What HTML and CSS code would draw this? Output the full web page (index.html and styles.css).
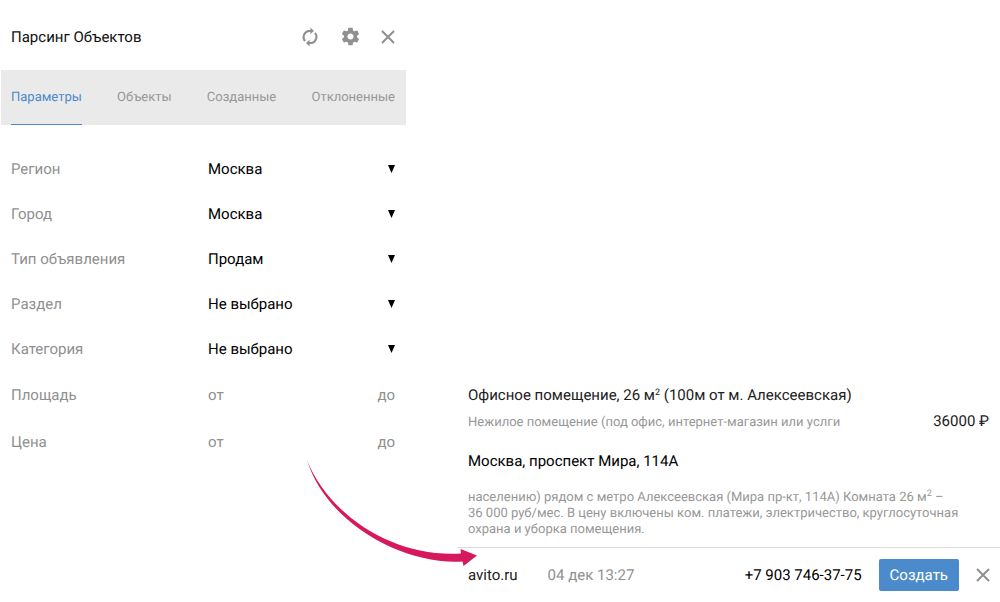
FILE: index.html
```html
<!DOCTYPE html>
<html lang="ru">
<head>
<meta charset="utf-8">
<meta name="viewport" content="width=device-width, initial-scale=1">
<title>Парсинг Объектов</title>
<link rel="stylesheet" href="styles.css">
</head>
<body>
<main class="page">
  <section class="panel">
    <header class="panel-header">
      <h1 class="panel-title">Парсинг Объектов</h1>
      <div class="actions">
        <button class="icon-button" type="button" aria-label="Обновить">
          <svg width="20" height="20" viewBox="0 0 20 20" fill="none" stroke="#909090" stroke-width="2">
            <path d="M5 14.200A6.300 6.300 0 0 1 8.500 4H11"/>
            <path d="M15 5.800A6.300 6.300 0 0 1 11.500 16H9"/>
            <path d="M10.400 .4 14 4 10.400 7.200zM9.600 12.800 6 16 9.600 19.600z" fill="#909090" stroke="none"/>
          </svg>
        </button>
        <button class="icon-button" type="button" aria-label="Настройки">
          <svg width="21" height="21" viewBox="0 0 24 24" fill="#909090">
            <path d="M19.43 12.98c.04-.32.07-.64.07-.98s-.03-.66-.07-.98l2.11-1.65c.19-.15.24-.42.12-.64l-2-3.46c-.12-.22-.39-.3-.61-.22l-2.49 1c-.52-.4-1.08-.73-1.69-.98l-.38-2.65C14.46 2.18 14.25 2 14 2h-4c-.25 0-.46.18-.49.42l-.38 2.65c-.61.25-1.17.59-1.69.98l-2.49-1c-.23-.09-.49 0-.61.22l-2 3.46c-.13.22-.07.49.12.64l2.11 1.65c-.04.32-.07.65-.07.98s.03.66.07.98l-2.11 1.65c-.19.15-.24.42-.12.64l2 3.46c.12.22.39.3.61.22l2.49-1c.52.4 1.08.73 1.69.98l.38 2.65c.03.24.24.42.49.42h4c.25 0 .46-.18.49-.42l.38-2.65c.61-.25 1.17-.59 1.69-.98l2.49 1c.23.09.49 0 .61-.22l2-3.46c.12-.22.07-.49-.12-.64l-2.11-1.65zM12 15.5c-1.93 0-3.500-1.57-3.500-3.500s1.57-3.500 3.500-3.500 3.500 1.57 3.500 3.500-1.57 3.500-3.500 3.500z"/>
          </svg>
        </button>
        <button class="icon-button" type="button" aria-label="Закрыть">
          <svg width="14" height="14" viewBox="0 0 14 14" stroke="#909090" stroke-width="2"><path d="M1 1 13 13M13 1 1 13"/></svg>
        </button>
      </div>
    </header>
    <nav class="tabs">
      <a class="tab tab-active" href="#params">Параметры</a>
      <a class="tab" href="#objects">Объекты</a>
      <a class="tab" href="#created">Созданные</a>
      <a class="tab" href="#rejected">Отклоненные</a>
    </nav>
    <form class="filters">
      <div class="row">
        <label class="label" for="region">Регион</label>
        <div class="picker">
          <select class="select" id="region"><option>Москва</option></select>
          <svg class="caret" width="7" height="8" viewBox="0 0 7 8"><path d="M0 0h7L3.500 8z"/></svg>
        </div>
      </div>
      <div class="row">
        <label class="label" for="city">Город</label>
        <div class="picker">
          <select class="select" id="city"><option>Москва</option></select>
          <svg class="caret" width="7" height="8" viewBox="0 0 7 8"><path d="M0 0h7L3.500 8z"/></svg>
        </div>
      </div>
      <div class="row">
        <label class="label" for="kind">Тип объявления</label>
        <div class="picker">
          <select class="select" id="kind"><option>Продам</option></select>
          <svg class="caret" width="7" height="8" viewBox="0 0 7 8"><path d="M0 0h7L3.500 8z"/></svg>
        </div>
      </div>
      <div class="row">
        <label class="label" for="section">Раздел</label>
        <div class="picker">
          <select class="select" id="section"><option>Не выбрано</option></select>
          <svg class="caret" width="7" height="8" viewBox="0 0 7 8"><path d="M0 0h7L3.500 8z"/></svg>
        </div>
      </div>
      <div class="row">
        <label class="label" for="category">Категория</label>
        <div class="picker">
          <select class="select" id="category"><option>Не выбрано</option></select>
          <svg class="caret" width="7" height="8" viewBox="0 0 7 8"><path d="M0 0h7L3.500 8z"/></svg>
        </div>
      </div>
      <div class="row row-range">
        <label class="label" for="area-from">Площадь</label>
        <div class="range">
          <input class="input" id="area-from" type="text" placeholder="от">
          <input class="input input-end" type="text" placeholder="до" aria-label="Площадь до">
        </div>
      </div>
      <div class="row row-range">
        <label class="label" for="price-from">Цена</label>
        <div class="range">
          <input class="input" id="price-from" type="text" placeholder="от">
          <input class="input input-end" type="text" placeholder="до" aria-label="Цена до">
        </div>
      </div>
    </form>
  </section>

  <article class="offer">
    <div class="offer-body">
      <h2 class="offer-title">Офисное помещение, 26 м<sup class="power">2</sup> (100м от м. Алексеевская)</h2>
      <div class="offer-summary">
        <p class="note">Нежилое помещение (под офис, интернет-магазин или услги</p>
        <span class="price">36000 ₽</span>
      </div>
      <p class="address">Москва, проспект Мира, 114А</p>
      <p class="note description">населению) рядом с метро Алексеевская (Мира пр-кт, 114А) Комната 26 м<sup class="power">2</sup> –<br>36 000 руб/мес. В цену включены ком. платежи, электричество, круглосуточная охрана и уборка помещения.</p>
    </div>
    <footer class="offer-footer">
      <a class="source" href="#avito">avito.ru</a>
      <time class="date">04 дек 13:27</time>
      <a class="phone" href="tel:+79037463775">+7 903 746-37-75</a>
      <button class="create" type="button">Создать</button>
      <button class="icon-button" type="button" aria-label="Скрыть">
        <svg width="14" height="14" viewBox="0 0 14 14" stroke="#909090" stroke-width="2"><path d="M1 1 13 13M13 1 1 13"/></svg>
      </button>
    </footer>
    <svg class="arrow" width="172" height="108" viewBox="0 0 172 108" fill="#d6185e" aria-hidden="true">
      <path d="M0 0C22 56 88 98 154 93.500L153.500 89 170 95.500 156.500 106 155.500 101.500C92 105 18 60 0 0z"/>
    </svg>
  </article>
</main>
</body>
</html>
```
FILE: styles.css
```css
* {
  box-sizing: border-box;
}

body {
  margin: 0;
  background: #fff;
  color: #212121;
  font-family: Roboto, "Noto Sans", sans-serif;
  font-size: 15px;
  line-height: 20px;
  text-rendering: geometricPrecision;
}

h1,
h2,
p {
  margin: 0;
  font-size: 15px;
  font-weight: 400;
}

a {
  color: inherit;
  text-decoration: none;
}

button,
select,
input {
  padding: 0;
  border: 0;
  background: none;
  font: inherit;
  text-rendering: inherit;
}

.page {
  display: grid;
  grid-template-columns: 406fr 543fr;
  column-gap: 51px;
  min-height: 100vh;
}

.panel {
  padding-left: 1px;
}

.panel-header {
  display: flex;
  align-items: center;
  justify-content: space-between;
  height: 70px;
  padding: 3px 11px 0 10px;
}

.panel-title {
  color: #111;
}

.actions {
  display: flex;
  align-items: center;
  gap: 20px;
}

.icon-button {
  display: flex;
}

.tabs {
  display: flex;
  justify-content: space-between;
  height: 55px;
  padding: 0 11px 0 10px;
  background: #eaeaea;
  color: #979797;
  font-size: 13px;
}

.tab {
  padding: 18px 0 16px;
  border-bottom: 1px solid transparent;
}

.tab-active {
  border-color: #4b8bcb;
  color: #4b8bcb;
}

.filters {
  padding: 21px 11px 0 10px;
}

.row {
  display: grid;
  grid-template-columns: 197fr 187fr;
  align-items: center;
  height: 45px;
}

.row-range {
  height: 47px;
}

.label {
  color: #909090;
}

.picker {
  display: flex;
  align-items: center;
}

.select {
  flex: 1;
  min-width: 0;
  appearance: none;
  color: #000;
}

.caret {
  flex: none;
}

.range {
  display: flex;
  justify-content: space-between;
}

.input {
  width: 50%;
  color: #000;
}

.input::placeholder {
  color: #909090;
}

.input-end {
  text-align: right;
}

.offer {
  position: relative;
  align-self: end;
}

.offer-body {
  padding: 0 11px 9px;
}

.power {
  font-size: 9px;
  line-height: 0;
  vertical-align: 5px;
}

.offer-summary {
  display: flex;
  align-items: baseline;
  justify-content: space-between;
  margin: 6px 0 18px;
}

.note {
  color: #979797;
  font-size: 13px;
}

.address {
  color: #000;
}

.description {
  margin-top: 19px;
  line-height: 16px;
}

.offer-footer {
  display: flex;
  align-items: center;
  padding: 11px 10px 11px 11px;
  border-top: 1px solid #dedede;
}

.date {
  margin-left: 30px;
  color: #909090;
}

.phone {
  margin-left: auto;
  color: #000;
}

.create {
  height: 32px;
  margin: 0 17px;
  padding: 0 11px;
  border-radius: 2px;
  background: #4b8bcb;
  color: #fff;
}

.arrow {
  position: absolute;
  left: -150px;
  bottom: 34px;
}
```
